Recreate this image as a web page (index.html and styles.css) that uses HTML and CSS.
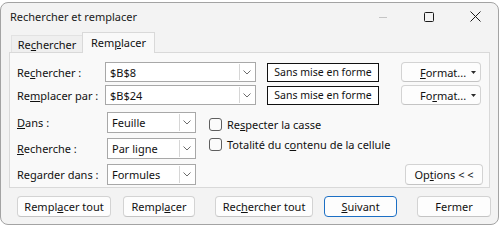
FILE: index.html
```html
<!DOCTYPE html>
<html lang="fr">
<head>
<meta charset="utf-8">
<title>Rechercher et remplacer</title>
<link rel="stylesheet" href="styles.css">
</head>
<body>
<div class="window">
  <div class="titlebar">
    <span class="title">Rechercher et remplacer</span>
    <div class="caption">
      <span class="cap"><svg width="10" height="10" viewBox="0 0 10 10"><path d="M1 5.5h8" stroke="#c4c4c4" stroke-width="1"/></svg></span>
      <span class="cap"><svg width="10" height="10" viewBox="0 0 10 10"><rect x="0.5" y="0.5" width="9" height="9" rx="1" fill="none" stroke="#1b1b1b" stroke-width="1"/></svg></span>
      <span class="cap"><svg width="11" height="11" viewBox="0 0 11 11"><path d="M0.5 0.5L10.5 10.5M10.5 0.5L0.5 10.5" stroke="#1b1b1b" stroke-width="1"/></svg></span>
    </div>
  </div>
  <div class="tabs">
    <span class="tab">Re<u>c</u>hercher</span>
    <span class="tab tab-active">Rem<u>p</u>lacer</span>
  </div>
  <div class="panel">
    <div class="top-rows">
      <div class="row">
        <span class="lbl lbl-wide">Re<u>c</u>hercher :</span>
        <div class="combo combo-wide"><span class="val">$B$8</span><span class="drop"><svg width="8" height="5" viewBox="0 0 8 5"><path d="M0.5 0.5L4 4L7.5 0.5" fill="none" stroke="#6b6b6b" stroke-width="1"/></svg></span></div>
        <div class="fmt-box">Sans mise en forme</div>
        <div class="btn btn-format"><span class="fmt-text"><u>F</u>ormat...</span><svg class="tri" width="5" height="3" viewBox="0 0 5 3"><path d="M0 0H5L2.5 3Z" fill="#2b2b2b"/></svg></div>
      </div>
      <div class="row">
        <span class="lbl lbl-wide">Re<u>m</u>placer par :</span>
        <div class="combo combo-wide"><span class="val">$B$24</span><span class="drop"><svg width="8" height="5" viewBox="0 0 8 5"><path d="M0.5 0.5L4 4L7.5 0.5" fill="none" stroke="#6b6b6b" stroke-width="1"/></svg></span></div>
        <div class="fmt-box">Sans mise en forme</div>
        <div class="btn btn-format"><span class="fmt-text">Fo<u>r</u>mat...</span><svg class="tri" width="5" height="3" viewBox="0 0 5 3"><path d="M0 0H5L2.5 3Z" fill="#2b2b2b"/></svg></div>
      </div>
    </div>
    <div class="options">
      <div class="selects">
        <div class="row row-sel">
          <span class="lbl lbl-narrow"><u>D</u>ans :</span>
          <div class="combo combo-small"><span class="val">Feuille</span><span class="drop"><svg width="8" height="5" viewBox="0 0 8 5"><path d="M0.5 0.5L4 4L7.5 0.5" fill="none" stroke="#6b6b6b" stroke-width="1"/></svg></span></div>
        </div>
        <div class="row row-sel">
          <span class="lbl lbl-narrow"><u>R</u>echerche :</span>
          <div class="combo combo-small"><span class="val">Par ligne</span><span class="drop"><svg width="8" height="5" viewBox="0 0 8 5"><path d="M0.5 0.5L4 4L7.5 0.5" fill="none" stroke="#6b6b6b" stroke-width="1"/></svg></span></div>
        </div>
        <div class="row row-sel">
          <span class="lbl lbl-narrow">Re<u>g</u>arder dans :</span>
          <div class="combo combo-small"><span class="val">Formules</span><span class="drop"><svg width="8" height="5" viewBox="0 0 8 5"><path d="M0.5 0.5L4 4L7.5 0.5" fill="none" stroke="#6b6b6b" stroke-width="1"/></svg></span></div>
        </div>
      </div>
      <div class="checks">
        <div class="check"><span class="box"></span><span>Re<u>s</u>pecter la casse</span></div>
        <div class="check"><span class="box"></span><span>Totalité du c<u>o</u>ntenu de la cellule</span></div>
      </div>
      <div class="btn btn-options">Op<u>t</u>ions &lt; &lt;</div>
    </div>
  </div>
  <div class="actions">
    <div class="btn b-rtout">Rempl<u>a</u>cer tout</div>
    <div class="btn b-rempl">Rempl<u>a</u>cer</div>
    <div class="btn b-ctout">Rec<u>h</u>ercher tout</div>
    <div class="btn b-suiv btn-default"><u>S</u>uivant</div>
    <div class="btn b-ferm">Fermer</div>
  </div>
</div>
</body>
</html>
```

FILE: styles.css
```css
html, body {
  margin: 0;
  padding: 0;
}
body {
  background: #ffffff;
  font-family: "Noto Sans", "Open Sans", sans-serif;
  font-size: 11px;
  color: #111111;
}
u {
  text-decoration: underline;
  text-underline-offset: 1px;
}
.window {
  box-sizing: border-box;
  width: 499px;
  height: 223px;
  margin-top: 2px;
  border: 1px solid #a3a3a3;
  border-radius: 8px;
  background: #f3f3f3;
  display: flex;
  flex-direction: column;
  overflow: hidden;
}
.titlebar {
  height: 27px;
  display: flex;
  align-items: center;
  justify-content: space-between;
  flex: none;
}
.title {
  padding-left: 9px;
  font-size: 11px;
  color: #1a1a1a;
}
.caption {
  display: flex;
  height: 100%;
}
.cap {
  width: 46px;
  display: flex;
  align-items: center;
  justify-content: center;
}
.cap svg {
  display: block;
}
.tabs {
  height: 22px;
  display: flex;
  align-items: flex-end;
  padding-left: 10px;
  flex: none;
}
.tab {
  box-sizing: border-box;
  width: 71px;
  height: 17px;
  display: flex;
  align-items: center;
  justify-content: center;
  background: #efefef;
  border: 1px solid #e2e2e2;
  border-bottom: none;
  border-right: none;
}
.tab-active {
  position: relative;
  z-index: 1;
  width: 73px;
  height: 21px;
  margin-bottom: -1px;
  background: #f9f9f9;
  border: 1px solid #d9d9d9;
  border-bottom: none;
  padding-bottom: 1px;
}
.panel {
  box-sizing: border-box;
  margin-left: 8px;
  width: 481px;
  height: 136px;
  background: #f9f9f9;
  border: 1px solid #d9d9d9;
  padding: 9px 7px 2px 7px;
  display: flex;
  flex-direction: column;
  flex: none;
}
.top-rows {
  display: flex;
  flex-direction: column;
  gap: 3px;
}
.row {
  display: flex;
  align-items: center;
  height: 20px;
}
.lbl {
  flex: none;
}
.lbl-wide {
  width: 88px;
}
.lbl-narrow {
  width: 90px;
}
.combo {
  box-sizing: border-box;
  height: 20px;
  display: flex;
  background: #ffffff;
  border: 1px solid #a8a8a8;
  flex: none;
}
.combo-wide {
  width: 151px;
}
.combo-small {
  width: 89px;
  height: 21px;
}
.val {
  flex: 1;
  display: flex;
  align-items: center;
  padding-left: 4px;
  color: #111111;
}
.drop {
  width: 14px;
  display: flex;
  align-items: center;
  justify-content: center;
  border-left: 1px solid #d6d6d6;
  margin: 1px 1px 1px 0;
  background: #ffffff;
}
.drop svg {
  display: block;
}
.fmt-box {
  box-sizing: border-box;
  width: 112px;
  height: 19px;
  margin-left: 11px;
  border: 1px solid #111111;
  background: #ffffff;
  display: flex;
  align-items: center;
  justify-content: center;
  font-size: 10.5px;
}
.btn {
  box-sizing: border-box;
  height: 21px;
  display: flex;
  align-items: center;
  justify-content: center;
  background: #fdfdfd;
  border: 1px solid #d3d3d3;
  border-bottom-color: #c4c4c4;
  border-radius: 4px;
  flex: none;
}
.btn-format {
  width: 80px;
  height: 20px;
  margin-left: 22px;
  justify-content: flex-start;
  padding-left: 18px;
}
.fmt-text {
  flex: 1;
}
.tri {
  display: block;
  margin-right: 4px;
}
.options {
  display: flex;
  margin-top: 7px;
  flex: 1;
}
.selects {
  display: flex;
  flex-direction: column;
  gap: 5px;
}
.row-sel {
  height: 21px;
}
.checks {
  margin-left: 13px;
  padding-top: 2px;
  display: flex;
  flex-direction: column;
}
.check {
  height: 20px;
  display: flex;
  align-items: center;
  gap: 5px;
}
.box {
  box-sizing: border-box;
  width: 13px;
  height: 13px;
  border: 1px solid #5f5f5f;
  border-radius: 3px;
  background: #fbfbfb;
}
.btn-options {
  width: 78px;
  align-self: flex-end;
  margin-left: auto;
  margin-right: -1px;
}
.actions {
  display: flex;
  margin-top: 8px;
  padding-left: 16px;
}
.b-rtout { width: 94px; }
.b-rempl { width: 72px; margin-left: 12px; }
.b-ctout { width: 98px; margin-left: 20px; }
.b-suiv { width: 73px; margin-left: 11px; }
.b-ferm { width: 74px; margin-left: 20px; }
.btn-default {
  border: 1px solid #1c6fc4;
}
```
